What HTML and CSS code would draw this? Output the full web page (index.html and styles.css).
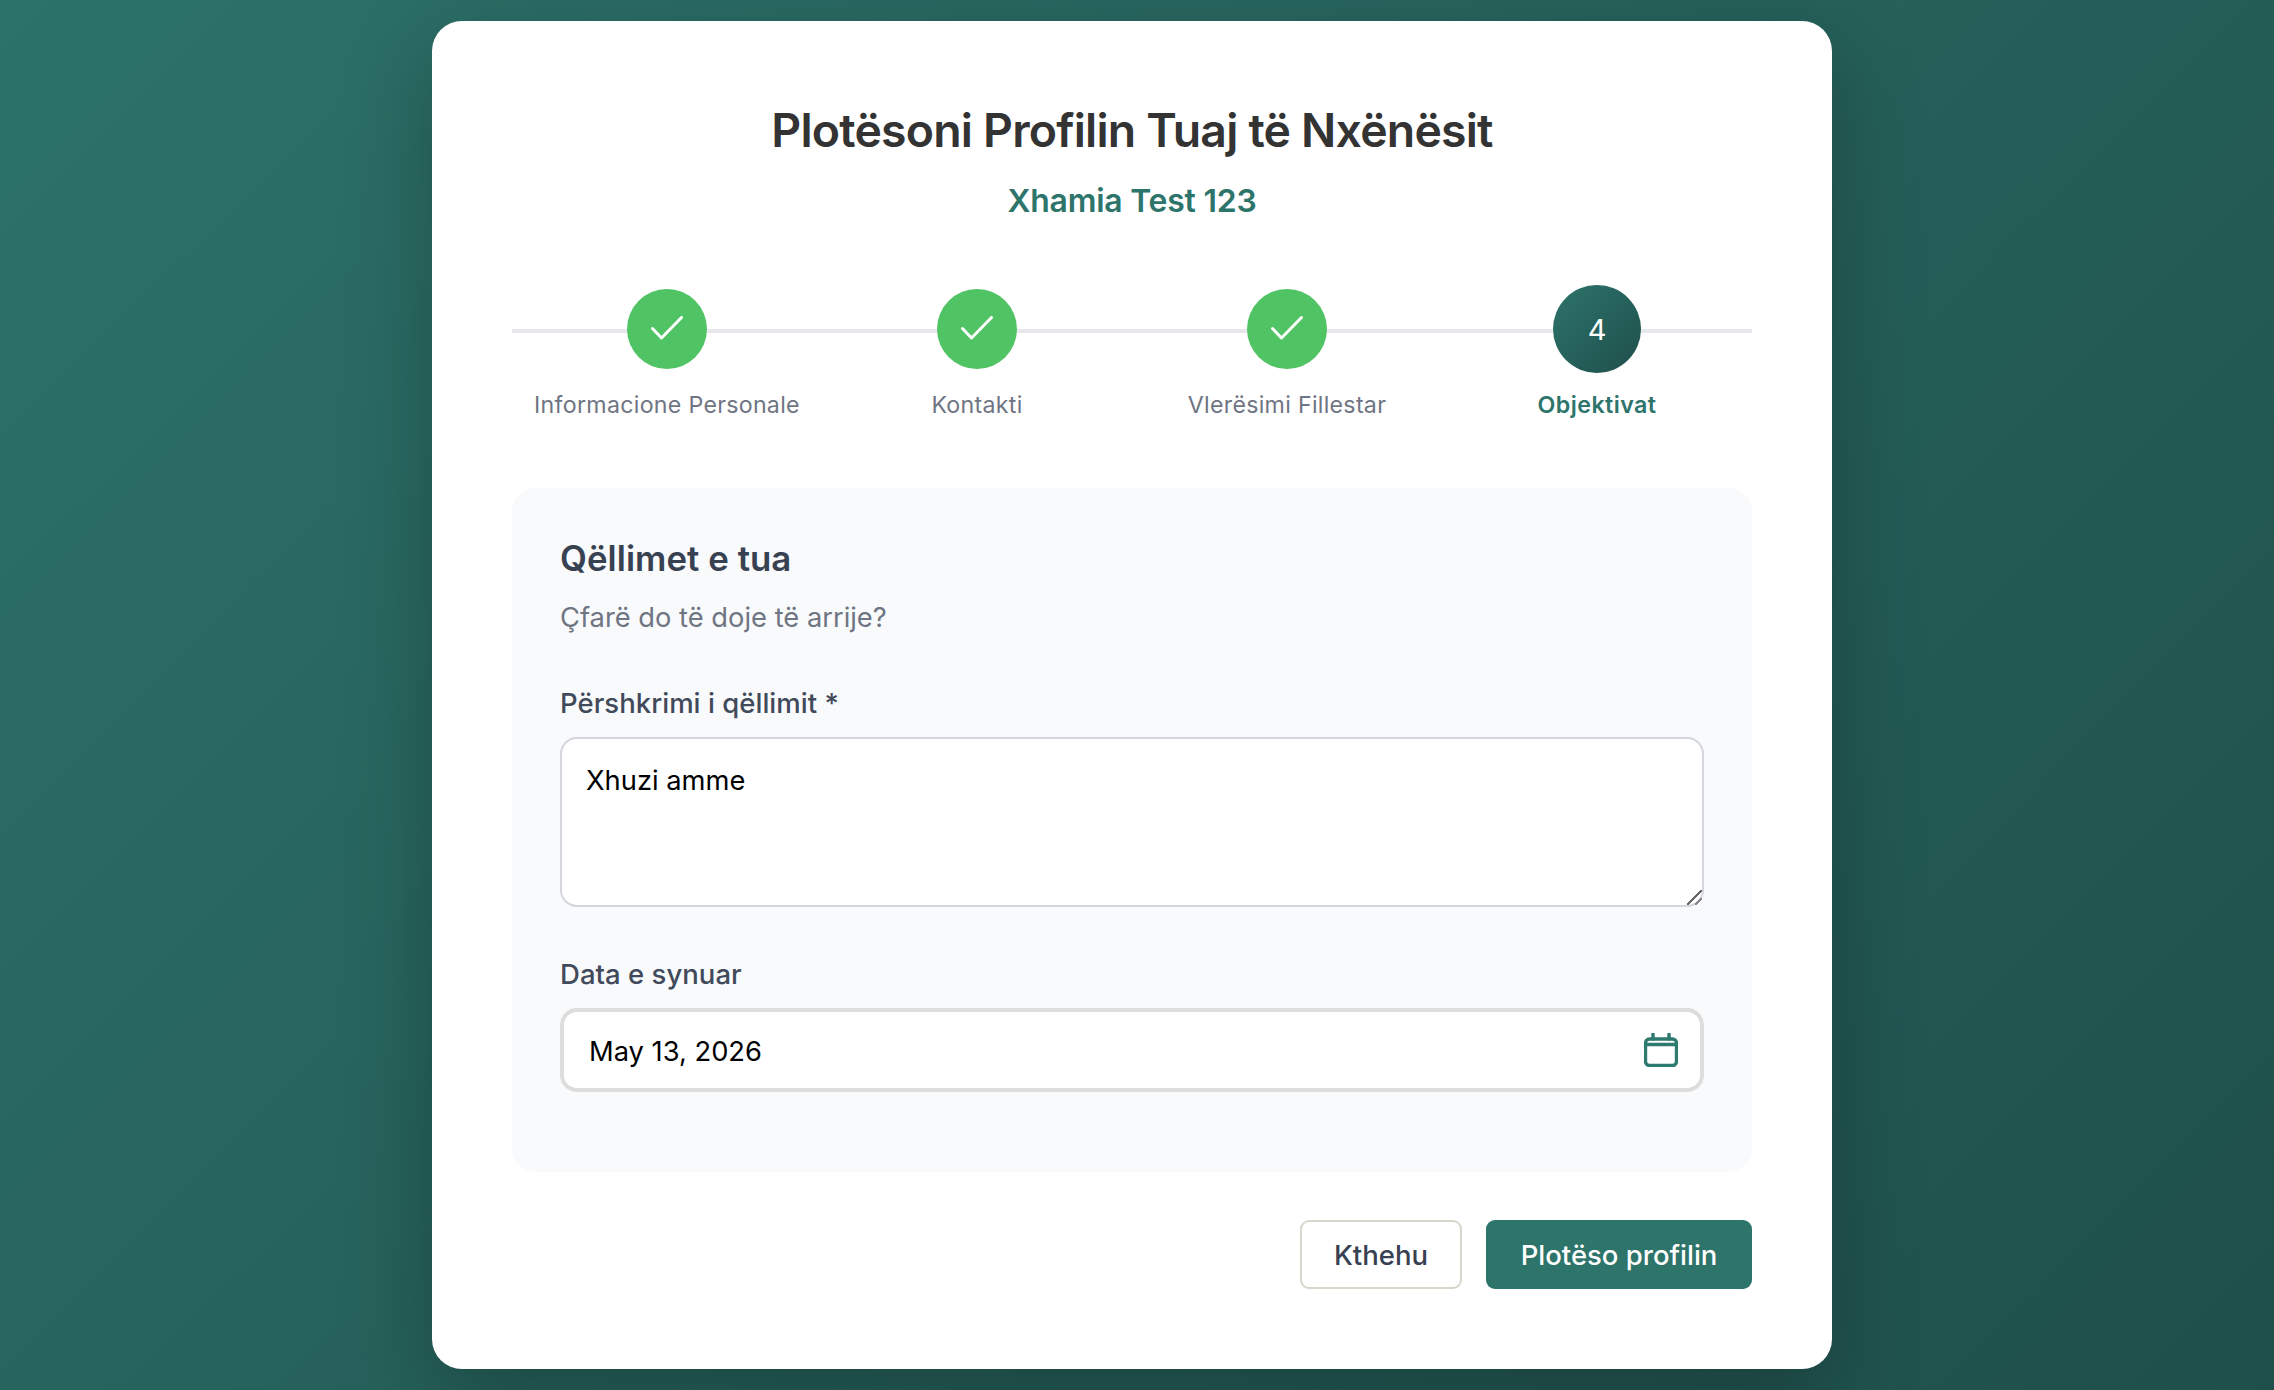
FILE: index.html
```html
<!DOCTYPE html>
<html lang="sq">

<head>
    <meta charset="UTF-8">
    <meta name="viewport" content="width=device-width, initial-scale=1.0">
    <title>Plotësoni Profilin</title>
    <link rel="stylesheet" href="styles.css">
</head>

<body>
    <div class="card">
        <h1 class="title">Plotësoni Profilin Tuaj të Nxënësit</h1>
        <p class="subtitle">Xhamia Test 123</p>

        <div class="steps">
            <div class="step done">
                <div class="circle">
                    <svg class="check" viewBox="0 0 32 24"><path d="M1.5 12.5l9 9.5 20-20.5" /></svg>
                </div>
                <span class="step-label">Informacione Personale</span>
            </div>
            <div class="step done">
                <div class="circle">
                    <svg class="check" viewBox="0 0 32 24"><path d="M1.5 12.5l9 9.5 20-20.5" /></svg>
                </div>
                <span class="step-label">Kontakti</span>
            </div>
            <div class="step done">
                <div class="circle">
                    <svg class="check" viewBox="0 0 32 24"><path d="M1.5 12.5l9 9.5 20-20.5" /></svg>
                </div>
                <span class="step-label">Vlerësimi Fillestar</span>
            </div>
            <div class="step active">
                <div class="circle">4</div>
                <span class="step-label">Objektivat</span>
            </div>
        </div>

        <div class="panel">
            <h2 class="panel-title">Qëllimet e tua</h2>
            <p class="panel-sub">Çfarë do të doje të arrije?</p>

            <label class="field-label" for="goal">Përshkrimi i qëllimit *</label>
            <textarea class="goal" id="goal">Xhuzi amme</textarea>

            <label class="field-label date-label" for="date">Data e synuar</label>
            <div class="date-field">
                <input class="date-input" id="date" type="text" value="May 13, 2026">
                <svg class="calendar" viewBox="0 0 34 34">
                    <rect x="1.5" y="6" width="31" height="26.5" rx="4" />
                    <path d="M1.5 11.5h31M9 1v5M25 1v5" />
                </svg>
            </div>
        </div>

        <div class="actions">
            <button class="btn btn-back">Kthehu</button>
            <button class="btn btn-finish">Plotëso profilin</button>
        </div>
    </div>
</body>

</html>
```

FILE: styles.css
```css
* {
    margin: 0;
    padding: 0;
    box-sizing: border-box;
}

body {
    height: 1390px;
    overflow: hidden;
    padding: 21px 10px 21px 0;
    display: flex;
    justify-content: center;
    background: linear-gradient(135deg, #2c7269, #1f4f4b);
    font-family: Inter, "Liberation Sans", sans-serif;
}

.card {
    width: 1400px;
    height: 1348px;
    flex-shrink: 0;
    padding: 80.5px 80px 0;
    background: #fff;
    border-radius: 30px;
    box-shadow: 0 29px 87px rgba(0, 0, 0, 0.25);
}

.title {
    font-size: 46.4px;
    line-height: 56px;
    font-weight: 600;
    letter-spacing: -0.79px;
    color: #333;
    text-align: center;
}

.subtitle {
    margin-top: 23px;
    font-size: 31.9px;
    line-height: 40px;
    font-weight: 600;
    letter-spacing: -0.2px;
    color: #2d746b;
    text-align: center;
}

.steps {
    margin-top: 64.5px;
    display: grid;
    grid-template-columns: repeat(4, 1fr);
    position: relative;
}

.steps::before {
    content: "";
    position: absolute;
    left: 0;
    right: 0;
    top: 44px;
    height: 4px;
    background: #e5e7eb;
}

.step {
    display: flex;
    flex-direction: column;
    align-items: center;
    position: relative;
}

.circle {
    width: 80px;
    height: 80px;
    margin-top: 4px;
    margin-bottom: 21px;
    border-radius: 50%;
    display: flex;
    align-items: center;
    justify-content: center;
    background: #50c364;
}

.check {
    width: 32px;
    height: 24px;
    margin-bottom: 2px;
    fill: none;
    stroke: #fff;
    stroke-width: 3;
    stroke-linecap: round;
    stroke-linejoin: round;
}

.step-label {
    font-size: 23.2px;
    line-height: 30px;
    letter-spacing: 0.28px;
    color: #6f7583;
}

.step.active .circle {
    width: 88px;
    height: 88px;
    margin-top: 0;
    margin-bottom: 17px;
    background: linear-gradient(135deg, #2d746b, #1f4f4b);
    color: #fff;
    font-size: 29px;
}

.step.active .step-label {
    font-weight: 600;
    letter-spacing: 0.45px;
    color: #2d746b;
}

.panel {
    margin-top: 68px;
    height: 684px;
    padding: 47px 48px 48px;
    background: #f9fafc;
    border-radius: 23px;
}

.panel-title {
    font-size: 34.8px;
    line-height: 46px;
    font-weight: 600;
    letter-spacing: 0.05px;
    color: #374151;
}

.panel-sub {
    margin-top: 19px;
    font-size: 27.3px;
    line-height: 36px;
    color: #6f7583;
}

.field-label {
    display: block;
    margin-top: 48.5px;
    font-size: 27.5px;
    line-height: 36px;
    font-weight: 500;
    letter-spacing: 0.03px;
    color: #414a5a;
}

.goal {
    display: block;
    width: 100%;
    height: 170px;
    margin-top: 16.5px;
    padding: 25px 24px;
    border: 2px solid #d3d6dc;
    border-radius: 17px;
    outline: none;
    background: #fff;
    font: 27.3px/34px Inter, "Liberation Sans", sans-serif;
    color: #000;
}

.goal::-webkit-resizer {
    background:
        linear-gradient(135deg, transparent 46%, #666 46%, #666 54%, transparent 54%) 0 0 / 15px 15px no-repeat,
        linear-gradient(135deg, transparent 42%, #888 42%, #888 58%, transparent 58%) 8px 8px / 7px 7px no-repeat;
}

.date-label {
    margin-top: 49px;
}

.date-field {
    display: flex;
    align-items: center;
    height: 84px;
    margin-top: 16px;
    padding: 0 22px 0 25px;
    background: #fff;
    border: 4px solid #ddd;
    border-radius: 17px;
}

.date-input {
    flex: 1;
    margin-top: 4px;
    border: none;
    outline: none;
    background: none;
    font: 27.3px/36px Inter, "Liberation Sans", sans-serif;
    color: #000;
}

.calendar {
    width: 34px;
    height: 34px;
    margin-left: -1px;
    fill: none;
    stroke: #2d7a6f;
    stroke-width: 3.4;
    stroke-linecap: round;
}

.actions {
    display: flex;
    justify-content: flex-end;
    gap: 24px;
    margin-top: 48px;
}

.btn {
    height: 69px;
    border-radius: 9px;
    font: 500 27.5px Inter, "Liberation Sans", sans-serif;
    cursor: pointer;
}

.btn-back {
    width: 162px;
    background: #fff;
    border: 2px solid #d9d6cb;
    color: #374151;
}

.btn-finish {
    width: 266px;
    background: #2d746b;
    border: none;
    color: #fff;
}
```
